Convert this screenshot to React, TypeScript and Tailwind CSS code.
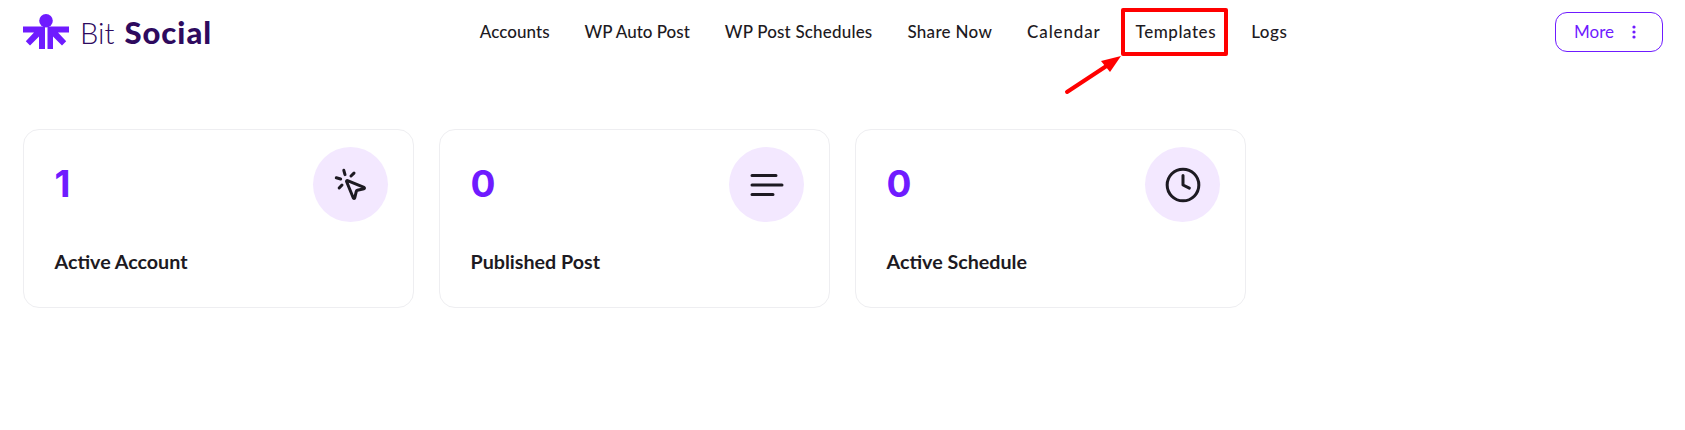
import React from "react";
import { MousePointerClick, Clock } from "lucide-react";

const font = { fontFamily: '"Lato", "Liberation Sans", sans-serif' };
const navItems = [
  { label: "Accounts", cls: "tracking-[0.05px]" },
  { label: "WP Auto Post", cls: "tracking-[0px]" },
  { label: "WP Post Schedules", cls: "tracking-[0.18px]" },
  { label: "Share Now", cls: "tracking-[0.3px]" },
  { label: "Calendar", cls: "tracking-[0.85px]" },
  { label: "Templates", cls: "tracking-[0.55px]" },
  { label: "Logs", cls: "tracking-[0.55px]" },
];

function Logo() {
  return (
    <svg width="48" height="36" viewBox="0 0 48 36" className="shrink-0">
      <circle cx="23" cy="6.8" r="6.8" fill="#6f1bff" />
      <path d="M0 12.5H22V35H16V22.5L7 31.6 2.8 27.3 11 18.5H0z" fill="#6f1bff" />
      <path d="M46 12.5H24.5V35H30V22.5L39 31.6 43.2 27.3 35 18.5H46z" fill="#6f1bff" />
    </svg>
  );
}

function LinesIcon() {
  return (
    <svg width="36" height="26" viewBox="0 0 36 26" fill="none" stroke="#1d1a22" strokeWidth="3" strokeLinecap="round">
      <path d="M3 3.5h24M3 13h30M3 22.5h21" />
    </svg>
  );
}

function Card({ value, label, icon }: { value: string; label: string; icon: React.ReactNode }) {
  return (
    <div className="h-[179px] rounded-[16px] border border-[#eeeef1] bg-white pl-[30.5px] pr-[25px] pt-[17px]">
      <div className="flex items-start justify-between">
        <div className="pt-[14px] font-['Inter'] text-[37px] leading-[45px] font-bold text-[#6f1bff]">{value}</div>
        <div className="flex h-[75px] w-[75px] items-center justify-center rounded-full bg-[#f3e8ff]">{icon}</div>
      </div>
      <div className="mt-[28px] text-[19.7px] leading-[24px] font-bold text-[#1d1a22]">{label}</div>
    </div>
  );
}

export default function App() {
  return (
    <div className="relative h-[430px] w-[1685px] overflow-hidden bg-white" style={font}>
      <header className="flex h-[64px] items-center justify-between pl-[23px] pr-[22px]">
        <div className="flex items-center gap-[9px] text-[#2e0a5e]">
          <Logo />
          <div className="text-[29px] leading-[34px] whitespace-nowrap">
            <span className="font-light">Bit</span>
            <span className="ml-[10px] text-[31px] font-black tracking-[1px]">Social</span>
          </div>
        </div>
        <nav className="flex items-center gap-[35px] text-[17px] font-medium text-[#1d1a22]">
          {navItems.map((item) => (
            <span key={item.label} className={`whitespace-nowrap ${item.cls}`}>{item.label}</span>
          ))}
        </nav>
        <button className="flex h-[40px] w-[108px] items-center gap-[18px] rounded-[12px] border-[1.5px] border-[#6f1bff] pl-[18px] text-[17px] text-[#6f1bff]">
          <span>More</span>
          <svg width="4" height="14" viewBox="0 0 4 14" fill="#6f1bff">
            <circle cx="2" cy="2" r="1.6" />
            <circle cx="2" cy="7" r="1.6" />
            <circle cx="2" cy="12" r="1.6" />
          </svg>
        </button>
      </header>

      <main className="grid grid-cols-4 gap-[25px] px-[23px] pt-[65px]">
        <Card value="1" label="Active Account" icon={<MousePointerClick size={36} strokeWidth={2} color="#1d1a22" />} />
        <Card value="0" label="Published Post" icon={<LinesIcon />} />
        <Card value="0" label="Active Schedule" icon={<Clock size={38} strokeWidth={1.9} color="#1d1a22" />} />
      </main>

      <div className="pointer-events-none absolute left-[1121px] top-[8px] h-[48px] w-[107px] rounded-[2px] border-[4px] border-[#ff0000]" />
      <svg className="pointer-events-none absolute left-[1060px] top-[50px]" width="70" height="50" viewBox="0 0 70 50" fill="none">
        <path d="M7 42 L48 15" stroke="#ff0000" strokeWidth="4" strokeLinecap="round" />
        <path d="M61 6 L41 11 L50 22 Z" fill="#ff0000" />
      </svg>
    </div>
  );
}
